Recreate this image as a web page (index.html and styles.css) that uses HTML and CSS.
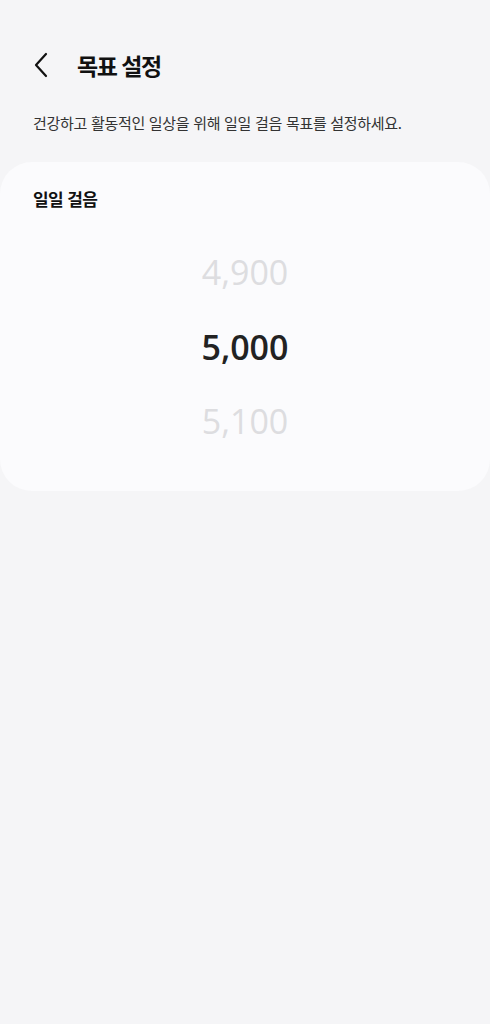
FILE: index.html
```html
<!DOCTYPE html>
<html lang="ko">
<head>
    <meta charset="UTF-8">
    <title>목표 설정</title>
    <meta name="viewport" content="width=device-width, initial-scale=1.0">
    <link rel="stylesheet" href="styles.css">
</head>
<body>
    <div class="header">
        <svg class="back" width="16" height="26" viewBox="0 0 16 26">
            <path d="M13 2 L3 13 L13 24" fill="none" stroke="#111" stroke-width="2.2" stroke-linecap="round" stroke-linejoin="round"/>
        </svg>
        <h1>목표 설정</h1>
    </div>
    <p class="desc">건강하고 활동적인 일상을 위해 일일 걸음 목표를 설정하세요.</p>
    <div class="card">
        <div class="card-title">일일 걸음</div>
        <div class="picker">
            <div class="num dim">4,900</div>
            <div class="num active">5,000</div>
            <div class="num dim">5,100</div>
        </div>
    </div>
</body>
</html>
```
FILE: styles.css
```css
body { font-family: "Noto Sans CJK KR", "Noto Sans", sans-serif; background: #f5f5f7; margin: 0; color: #111; }
.header { display: flex; align-items: center; padding: 48px 0 0 33px; height: 34px; }
.back { margin-right: 28px; }
h1 { font-size: 23px; font-weight: 700; margin: 0; letter-spacing: -1.5px; }
.desc { font-size: 15px; color: #333; margin: 30px 0 0 33px; letter-spacing: -0.3px; }
.card { background: #fbfbfd; border-radius: 32px; margin-top: 29px; padding: 24px 33px 32px; height: 273px; }
.card-title { font-size: 17px; font-weight: 700; letter-spacing: -0.6px; }
.picker { display: flex; flex-direction: column; align-items: center; margin-top: 24px; }
.num { font-family: "Open Sans", sans-serif; font-size: 34px; height: 74.5px; line-height: 74.5px; }
.dim { color: #dddde0; font-weight: 400; }
.active { color: #222; font-weight: 600; }
```
